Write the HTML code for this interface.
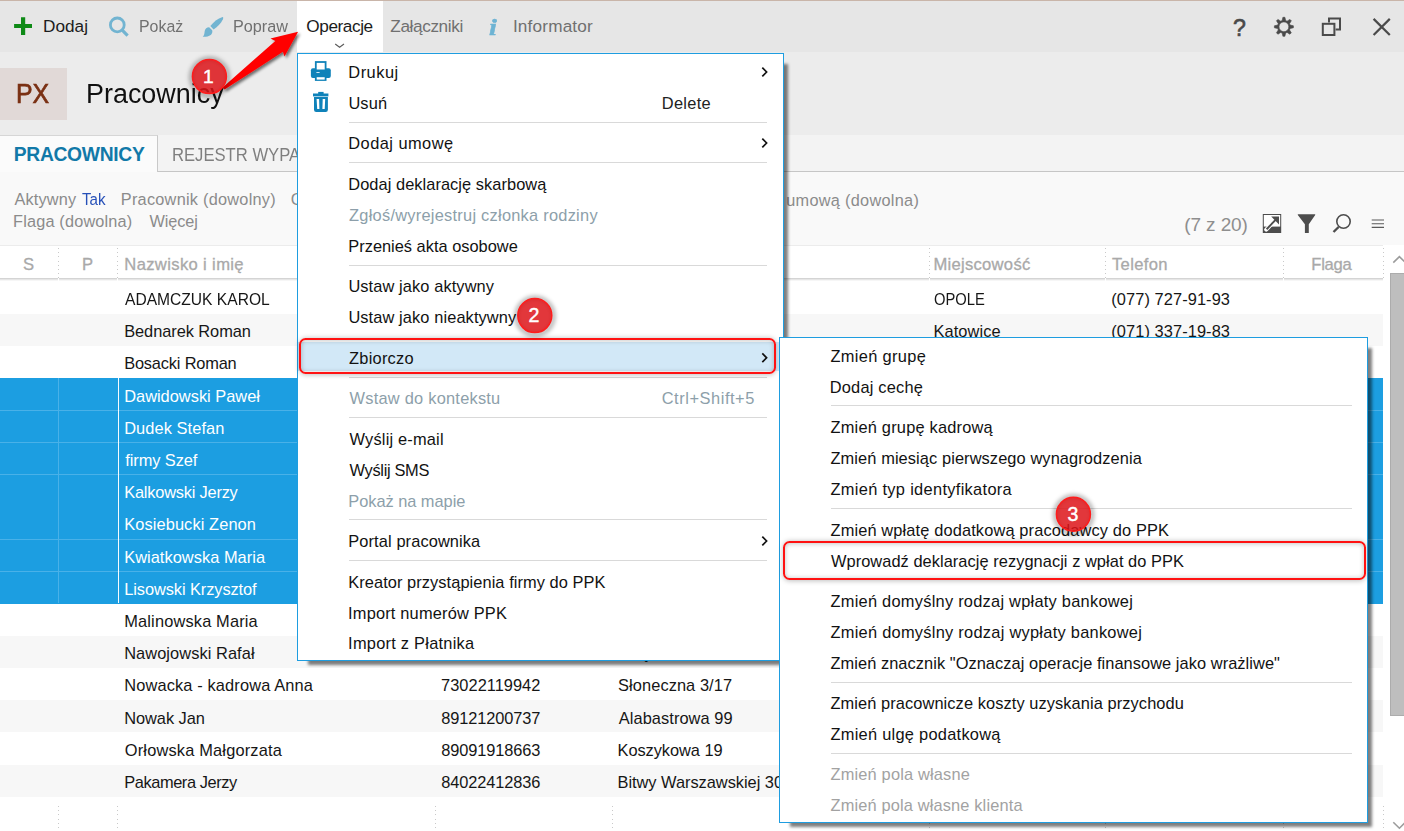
<!DOCTYPE html>
<html lang="pl"><head><meta charset="utf-8"><title>Pracownicy</title>
<style>
html,body{margin:0;padding:0}
body{width:1404px;height:831px;position:relative;overflow:hidden;background:#fff;font-family:"Liberation Sans",sans-serif}
.a{position:absolute}
.t{position:absolute;white-space:pre}
svg{position:absolute;left:0;top:0;overflow:visible}
.sep{position:absolute;height:1px;background:#d9d9d9}
.vd{position:absolute;width:1px;background:repeating-linear-gradient(to bottom,#c9c9c9 0,#c9c9c9 1px,transparent 1px,transparent 4.2px)}
</style></head><body>

<div class="a" style="left:0;top:0;width:1404px;height:52px;background:#e6e6e6"></div>
<div class="a" style="left:0;top:0;width:1404px;height:1px;background:#c9b5a9"></div>
<div class="a" style="left:297px;top:1px;width:85.5px;height:52px;background:#fff"></div>
<div class="a" style="left:0;top:52px;width:1404px;height:83px;background:#ececec"></div>
<div class="a" style="left:0;top:68px;width:67px;height:52px;background:#e1d9d7"></div>
<div class="a" style="left:0;top:135px;width:1404px;height:37px;background:#f3f3f3"></div>
<div class="a" style="left:0;top:171px;width:1404px;height:1px;background:#c6c6c6"></div>
<div class="a" style="left:0;top:135px;width:157.5px;height:37px;background:#fbfbfb;border-top:1px solid #d6d6d6;border-right:1px solid #c9c9c9;box-sizing:border-box"></div>
<div class="a" style="left:0;top:172px;width:1404px;height:73px;background:#f9f9f9"></div>
<div class="a" style="left:0;top:245px;width:1404px;height:586px;background:#fff"></div>
<div class="a" style="left:0;top:245px;width:1383px;height:1px;background:#ececec"></div>
<div class="a" style="left:0;top:278px;width:1383px;height:1px;background:#d4d4d4"></div><div class="a" style="left:0;top:279px;width:1383px;height:1px;background:#e6e6e6"></div><div class="a" style="left:0;top:280px;width:1383px;height:1px;background:#f6f6f6"></div>
<div class="a" style="left:0;top:281.5px;width:1383px;height:32.5px;background:#ffffff"></div>
<div class="a" style="left:0;top:313.7px;width:1383px;height:32.5px;background:#f7f7f7"></div>
<div class="a" style="left:0;top:345.9px;width:1383px;height:32.5px;background:#ffffff"></div>
<div class="a" style="left:0;top:378.1px;width:1383px;height:32.5px;background:#1c9ee1"></div>
<div class="a" style="left:0;top:410.3px;width:1383px;height:32.5px;background:#1c9ee1"></div>
<div class="a" style="left:0;top:442.5px;width:1383px;height:32.5px;background:#1c9ee1"></div>
<div class="a" style="left:0;top:474.7px;width:1383px;height:32.5px;background:#1c9ee1"></div>
<div class="a" style="left:0;top:506.9px;width:1383px;height:32.5px;background:#1c9ee1"></div>
<div class="a" style="left:0;top:539.1px;width:1383px;height:32.5px;background:#1c9ee1"></div>
<div class="a" style="left:0;top:571.3px;width:1383px;height:32.5px;background:#1c9ee1"></div>
<div class="a" style="left:0;top:603.5px;width:1383px;height:32.5px;background:#ffffff"></div>
<div class="a" style="left:0;top:635.7px;width:1383px;height:32.5px;background:#f7f7f7"></div>
<div class="a" style="left:0;top:667.9px;width:1383px;height:32.5px;background:#ffffff"></div>
<div class="a" style="left:0;top:700.1px;width:1383px;height:32.5px;background:#f7f7f7"></div>
<div class="a" style="left:0;top:732.3px;width:1383px;height:32.5px;background:#ffffff"></div>
<div class="a" style="left:0;top:764.5px;width:1383px;height:32.5px;background:#f7f7f7"></div>
<div class="a" style="left:0;top:409.8px;width:1383px;height:1px;background:#49b1e8"></div>
<div class="a" style="left:0;top:442.0px;width:1383px;height:1px;background:#49b1e8"></div>
<div class="a" style="left:0;top:474.2px;width:1383px;height:1px;background:#49b1e8"></div>
<div class="a" style="left:0;top:538.6px;width:1383px;height:1px;background:#49b1e8"></div>
<div class="a" style="left:0;top:570.8px;width:1383px;height:1px;background:#49b1e8"></div>
<div class="a" style="left:58px;top:378.1px;width:1px;height:225.4px;background:#49b1e8"></div>
<div class="a" style="left:117.5px;top:378.1px;width:1.3px;height:225.4px;background:#f4fbff"></div>
<div class="a" style="left:58px;top:277px;width:1px;height:4px;background:#fff"></div>
<div class="vd" style="left:58px;top:248px;height:30px"></div>
<div class="vd" style="left:58px;top:806.0px;height:25.0px"></div>
<div class="a" style="left:117px;top:277px;width:1px;height:4px;background:#fff"></div>
<div class="vd" style="left:117px;top:248px;height:30px"></div>
<div class="vd" style="left:117px;top:806.0px;height:25.0px"></div>
<div class="a" style="left:435px;top:277px;width:1px;height:4px;background:#fff"></div>
<div class="vd" style="left:435px;top:248px;height:30px"></div>
<div class="vd" style="left:435px;top:806.0px;height:25.0px"></div>
<div class="a" style="left:612px;top:277px;width:1px;height:4px;background:#fff"></div>
<div class="vd" style="left:612px;top:248px;height:30px"></div>
<div class="vd" style="left:612px;top:806.0px;height:25.0px"></div>
<div class="a" style="left:928.5px;top:277px;width:1px;height:4px;background:#fff"></div>
<div class="vd" style="left:928.5px;top:248px;height:30px"></div>
<div class="vd" style="left:928.5px;top:806.0px;height:25.0px"></div>
<div class="a" style="left:1105px;top:277px;width:1px;height:4px;background:#fff"></div>
<div class="vd" style="left:1105px;top:248px;height:30px"></div>
<div class="vd" style="left:1105px;top:806.0px;height:25.0px"></div>
<div class="a" style="left:1283px;top:277px;width:1px;height:4px;background:#fff"></div>
<div class="vd" style="left:1283px;top:248px;height:30px"></div>
<div class="vd" style="left:1283px;top:806.0px;height:25.0px"></div>
<div class="a" style="left:1382.5px;top:277px;width:1px;height:4px;background:#fff"></div>
<div class="vd" style="left:1382.5px;top:248px;height:30px"></div>
<div class="vd" style="left:1382.5px;top:806.0px;height:25.0px"></div>
<div class="a" style="left:1383.5px;top:245px;width:21px;height:586px;background:#fff"></div>
<div class="a" style="left:1390.3px;top:272.5px;width:15px;height:443px;background:#bebebe;border:1px solid #acacac;box-sizing:border-box"></div>
<svg width="1404" height="831" viewBox="0 0 1404 831">
<g fill="none" stroke="#9c9c9c" stroke-width="1.6"><polyline points="1393.3,262.6 1399.4,256.6 1405.5,262.6"/><polyline points="1393.3,822.2 1399.4,828.2 1405.5,822.2"/></g>
<polyline points="335.2,44 339.6,47.2 344,44" fill="none" stroke="#5a5a5a" stroke-width="1.1"/>
<!-- plus -->
<path d="M21 17.2h4.2v6.7H32v4.1h-6.8V35H21v-7H14.1v-4.1H21z" fill="#0e8a16"/>
<!-- magnifier -->
<circle cx="117.3" cy="24.9" r="6.9" fill="none" stroke="#72b4d1" stroke-width="2.8"/>
<path d="M122.2 30.2 L127.6 35.6" stroke="#72b4d1" stroke-width="3.2" stroke-linecap="butt"/>
<!-- brush -->
<path d="M222.6 17 C223.4 16.9 223.3 18.2 222.9 19.2 C221 23.2 217.8 26.6 213.6 29.4 L210.3 26 C213.6 22 217.5 18.6 222.6 17 Z" fill="#72b4d1"/>
<path d="M209.2 27.3 L212.2 30.3 C213 33.2 211 35.8 207.6 36.4 C205.8 36.8 203.8 36.9 202.7 36.7 C204.6 35.2 204.4 33 204.7 31 C205.1 28.6 207 27.2 209.2 27.3 Z" fill="#72b4d1"/>
<!-- gear -->

<path d="M1282.15,20.60L1282.90,17.30L1284.90,17.30L1285.65,20.60L1287.05,21.18L1289.91,19.38L1291.32,20.79L1289.52,23.65L1290.10,25.05L1293.40,25.80L1293.40,27.80L1290.10,28.55L1289.52,29.95L1291.32,32.81L1289.91,34.22L1287.05,32.42L1285.65,33.00L1284.90,36.30L1282.90,36.30L1282.15,33.00L1280.75,32.42L1277.89,34.22L1276.48,32.81L1278.28,29.95L1277.70,28.55L1274.40,27.80L1274.40,25.80L1277.70,25.05L1278.28,23.65L1276.48,20.79L1277.89,19.38L1280.75,21.18ZM1288.80,26.80A4.9,4.9 0 1,0 1279.00,26.80A4.9,4.9 0 1,0 1288.80,26.80Z" fill="#4a4a4a" fill-rule="evenodd" stroke="#4a4a4a" stroke-width="0.6" stroke-linejoin="round"/>

<!-- restore -->
<g fill="none" stroke="#4a4a4a" stroke-width="2"><path d="M1329 22.6V18.4H1340V29.5H1335.6"/><rect x="1322.8" y="23.8" width="11.6" height="11.2"/></g>
<!-- close -->
<g stroke="#4a4a4a" stroke-width="2.2"><path d="M1373.6 18.9L1389.8 35M1389.8 18.9L1373.6 35"/></g>
<!-- export icon -->
<rect x="1263.3" y="214.5" width="17.4" height="18" fill="#fff" stroke="#4d4d4d" stroke-width="1"/>
<rect x="1263" y="226.6" width="18" height="6.3" fill="#4d4d4d"/>
<path d="M1266.2 229.6L1275.6 219.8" stroke="#fff" stroke-width="4" stroke-linecap="round"/>
<path d="M1266.6 229.2L1276 219.4" stroke="#4d4d4d" stroke-width="2" stroke-linecap="butt"/>
<path d="M1271.2 216.6H1279V224.6Z" fill="#4d4d4d"/>
<!-- funnel -->
<path d="M1297.8 214.2H1315.2V215L1308.8 224.2V232.9H1304.9V224.2L1297.8 215Z" fill="#4d4d4d"/>
<!-- search -->
<circle cx="1343.5" cy="221.5" r="6.7" fill="none" stroke="#4d4d4d" stroke-width="1.6"/>
<path d="M1338.6 227L1333.5 232" stroke="#4d4d4d" stroke-width="2.4"/>
<!-- hamburger -->
<g stroke="#5a5a5a" stroke-width="1.1"><path d="M1371.7 220H1384M1371.7 223.7H1384M1371.7 227.4H1384"/></g>
</svg>

<span class="t" style="top:15px;font-size:17.2px;line-height:22px;color:#1c1c1c;left:43.10px;">Dodaj</span>
<span class="t" style="top:15px;font-size:17.2px;line-height:22px;color:#707070;left:139.30px;transform:scaleX(0.9254);transform-origin:0 0;">Pokaż</span>
<span class="t" style="top:15px;font-size:17.2px;line-height:22px;color:#707070;left:233.28px;transform:scaleX(0.9421);transform-origin:0 0;">Popraw</span>
<span class="t" style="top:15px;font-size:17.2px;line-height:22px;color:#707070;left:390.30px;letter-spacing:-0.383px;">Załączniki</span>
<span class="t" style="top:15px;font-size:17.2px;line-height:22px;color:#707070;left:512.90px;letter-spacing:0.172px;">Informator</span>
<span class="t" style="top:12px;font-size:24px;line-height:31px;color:#6db3d3;left:488.80px;font-weight:700;font-family:'Liberation Serif', serif;font-style:italic;-webkit-text-stroke:0.5px #6db3d3;transform:scaleX(1.18);transform-origin:0 0;">i</span>
<span class="t" style="top:13px;font-size:23.2px;line-height:30px;color:#4a4a4a;left:1233.10px;-webkit-text-stroke:0.6px #4a4a4a;">?</span>
<span class="t" style="top:75px;font-size:28.2px;line-height:37px;color:#7a3013;left:16.45px;transform:scaleX(0.8829);transform-origin:0 0;-webkit-text-stroke:0.7px #7a3013;">PX</span>
<span class="t" style="top:75px;font-size:28.2px;line-height:37px;color:#101010;left:86.40px;transform:scaleX(0.9551);transform-origin:0 0;">Pracownicy</span>
<span class="t" style="top:142px;font-size:19.3px;line-height:25px;color:#1279a8;left:13.80px;letter-spacing:-0.328px;font-weight:700;">PRACOWNICY</span>
<span class="t" style="top:142px;font-size:19.2px;line-height:25px;color:#7f7f7f;left:172.10px;transform:scaleX(0.8669);transform-origin:0 0;">REJESTR WYPADKÓW</span>
<span class="t" style="top:189px;font-size:16.3px;line-height:21px;color:#8b8b8b;left:14.40px;letter-spacing:0.177px;">Aktywny</span>
<span class="t" style="top:189px;font-size:16.3px;line-height:21px;color:#2650b8;left:81.82px;transform:scaleX(0.9317);transform-origin:0 0;">Tak</span>
<span class="t" style="top:189px;font-size:16.3px;line-height:21px;color:#8b8b8b;left:120.80px;letter-spacing:0.258px;">Pracownik (dowolny)</span>
<span class="t" style="top:189px;font-size:16.3px;line-height:21px;color:#8b8b8b;left:290.70px;letter-spacing:0.300px;">Cecha (dowolna)</span>
<span class="t" style="top:190px;font-size:16.3px;line-height:21px;color:#8b8b8b;left:704.47px;letter-spacing:0.300px;">Z aktywną umową (dowolna)</span>
<span class="t" style="top:211px;font-size:16.3px;line-height:21px;color:#8b8b8b;left:13.10px;letter-spacing:0.168px;">Flaga (dowolna)</span>
<span class="t" style="top:211px;font-size:16.3px;line-height:21px;color:#8b8b8b;left:149.50px;letter-spacing:-0.077px;">Więcej</span>
<span class="t" style="top:212px;font-size:19.0px;line-height:25px;color:#8e8e8e;left:1184.20px;letter-spacing:-0.098px;">(7 z 20)</span>
<span class="t" style="top:254px;font-size:16.6px;line-height:22px;color:#a9a9a9;left:23.10px;-webkit-text-stroke:0.3px #a9a9a9;">S</span>
<span class="t" style="top:254px;font-size:16.6px;line-height:22px;color:#a9a9a9;left:81.90px;-webkit-text-stroke:0.3px #a9a9a9;">P</span>
<span class="t" style="top:254px;font-size:16.6px;line-height:22px;color:#a9a9a9;left:124.30px;letter-spacing:0.354px;-webkit-text-stroke:0.3px #a9a9a9;">Nazwisko i imię</span>
<span class="t" style="top:254px;font-size:16.6px;line-height:22px;color:#a9a9a9;left:933.40px;letter-spacing:0.281px;-webkit-text-stroke:0.3px #a9a9a9;">Miejscowość</span>
<span class="t" style="top:254px;font-size:16.6px;line-height:22px;color:#a9a9a9;left:1112.00px;letter-spacing:0.317px;-webkit-text-stroke:0.3px #a9a9a9;">Telefon</span>
<span class="t" style="top:254px;font-size:16.6px;line-height:22px;color:#a9a9a9;left:1311.30px;letter-spacing:-0.248px;-webkit-text-stroke:0.3px #a9a9a9;">Flaga</span>
<span class="t" style="top:289px;font-size:16.4px;line-height:21px;color:#161616;left:125.20px;transform:scaleX(0.9515);transform-origin:0 0;">ADAMCZUK KAROL</span>
<span class="t" style="top:289px;font-size:16.4px;line-height:21px;color:#161616;left:934.07px;transform:scaleX(0.8990);transform-origin:0 0;">OPOLE</span>
<span class="t" style="top:289px;font-size:16.4px;line-height:21px;color:#161616;left:1111.30px;letter-spacing:0.079px;">(077) 727-91-93</span>
<span class="t" style="top:321px;font-size:16.4px;line-height:21px;color:#161616;left:124.20px;letter-spacing:-0.062px;">Bednarek Roman</span>
<span class="t" style="top:321px;font-size:16.4px;line-height:21px;color:#161616;left:933.40px;letter-spacing:0.111px;">Katowice</span>
<span class="t" style="top:321px;font-size:16.4px;line-height:21px;color:#161616;left:1111.30px;letter-spacing:0.079px;">(071) 337-19-83</span>
<span class="t" style="top:353px;font-size:16.4px;line-height:21px;color:#161616;left:124.20px;letter-spacing:-0.186px;">Bosacki Roman</span>
<span class="t" style="top:386px;font-size:16.4px;line-height:21px;color:#ffffff;left:124.20px;">Dawidowski Paweł</span>
<span class="t" style="top:418px;font-size:16.4px;line-height:21px;color:#ffffff;left:124.20px;letter-spacing:0.077px;">Dudek Stefan</span>
<span class="t" style="top:450px;font-size:16.4px;line-height:21px;color:#ffffff;left:125.30px;letter-spacing:-0.093px;">firmy Szef</span>
<span class="t" style="top:482px;font-size:16.4px;line-height:21px;color:#ffffff;left:124.20px;letter-spacing:-0.211px;">Kalkowski Jerzy</span>
<span class="t" style="top:514px;font-size:16.4px;line-height:21px;color:#ffffff;left:124.20px;letter-spacing:0.097px;">Kosiebucki Zenon</span>
<span class="t" style="top:547px;font-size:16.4px;line-height:21px;color:#ffffff;left:124.20px;letter-spacing:0.035px;">Kwiatkowska Maria</span>
<span class="t" style="top:579px;font-size:16.4px;line-height:21px;color:#ffffff;left:124.20px;letter-spacing:-0.083px;">Lisowski Krzysztof</span>
<span class="t" style="top:611px;font-size:16.4px;line-height:21px;color:#161616;left:124.20px;letter-spacing:0.159px;">Malinowska Maria</span>
<span class="t" style="top:643px;font-size:16.4px;line-height:21px;color:#161616;left:124.20px;letter-spacing:0.068px;">Nawojowski Rafał</span>
<span class="t" style="top:643px;font-size:16.4px;line-height:21px;color:#161616;left:441.20px;letter-spacing:-0.121px;">87120509876</span>
<span class="t" style="top:643px;font-size:16.4px;line-height:21px;color:#161616;left:617.50px;letter-spacing:0.250px;">Księcia Józefa 18, 100</span>
<span class="t" style="top:675px;font-size:16.4px;line-height:21px;color:#161616;left:124.20px;letter-spacing:0.136px;">Nowacka - kadrowa Anna</span>
<span class="t" style="top:675px;font-size:16.4px;line-height:21px;color:#161616;left:441.10px;letter-spacing:0.021px;">73022119942</span>
<span class="t" style="top:675px;font-size:16.4px;line-height:21px;color:#161616;left:618.10px;letter-spacing:0.074px;">Słoneczna 3/17</span>
<span class="t" style="top:708px;font-size:16.4px;line-height:21px;color:#161616;left:124.20px;letter-spacing:-0.038px;">Nowak Jan</span>
<span class="t" style="top:708px;font-size:16.4px;line-height:21px;color:#161616;left:441.20px;letter-spacing:-0.111px;">89121200737</span>
<span class="t" style="top:708px;font-size:16.4px;line-height:21px;color:#161616;left:618.80px;letter-spacing:0.060px;">Alabastrowa 99</span>
<span class="t" style="top:740px;font-size:16.4px;line-height:21px;color:#161616;left:124.80px;letter-spacing:0.172px;">Orłowska Małgorzata</span>
<span class="t" style="top:740px;font-size:16.4px;line-height:21px;color:#161616;left:441.20px;letter-spacing:-0.121px;">89091918663</span>
<span class="t" style="top:740px;font-size:16.4px;line-height:21px;color:#161616;left:617.50px;letter-spacing:-0.057px;">Koszykowa 19</span>
<span class="t" style="top:772px;font-size:16.4px;line-height:21px;color:#161616;left:124.20px;letter-spacing:-0.414px;">Pakamera Jerzy</span>
<span class="t" style="top:772px;font-size:16.4px;line-height:21px;color:#161616;left:441.20px;letter-spacing:-0.121px;">84022412836</span>
<span class="t" style="top:772px;font-size:16.4px;line-height:21px;color:#161616;left:617.50px;letter-spacing:-0.027px;">Bitwy Warszawskiej 30</span>
<span class="t" style="top:15px;font-size:17.2px;line-height:22px;color:#1c1c1c;left:306.30px;letter-spacing:-0.418px;">Operacje</span>
<div class="a" style="left:308px;top:64px;width:480px;height:601px;background:rgba(0,0,0,.5);filter:blur(1.7px)"></div>
<div class="a" style="left:297px;top:53px;width:487px;height:608px;background:#fff;border:1px solid #1e9de0;box-sizing:border-box"></div>
<div class="sep" style="left:348.7px;top:121.8px;width:418.3px"></div>
<div class="sep" style="left:348.7px;top:162.2px;width:418.3px"></div>
<div class="sep" style="left:348.7px;top:265.0px;width:418.3px"></div>
<div class="sep" style="left:348.7px;top:376.6px;width:418.3px"></div>
<div class="sep" style="left:348.7px;top:416.5px;width:418.3px"></div>
<div class="sep" style="left:348.7px;top:519.4px;width:418.3px"></div>
<div class="sep" style="left:348.7px;top:560.1px;width:418.3px"></div>
<div class="a" style="left:298px;top:341.5px;width:485px;height:29.8px;background:#d2e8f7"></div>
<svg width="1404" height="831" viewBox="0 0 1404 831">
<!-- printer -->
<g fill="#0f82b9"><rect x="310.9" y="68.3" width="19.9" height="9.8" rx="2"/><path d="M314.9 61.1h11.6v8h-11.6z"/><rect x="314.9" y="76" width="11.6" height="4.9"/></g>
<rect x="316.7" y="62.9" width="8" height="6.6" fill="#fff"/><rect x="316.7" y="77.2" width="8" height="2.4" fill="#fff"/><rect x="316.4" y="72" width="3.2" height="1" fill="#cfe7f3"/>
<!-- trash -->
<g fill="#0f82b9"><rect x="313" y="93.5" width="15.4" height="2.9"/><rect x="318.2" y="91.9" width="5.4" height="2.2"/><path d="M314 97H327.9V109.8a2.2 2.2 0 0 1-2.2 2.2H316.2a2.2 2.2 0 0 1-2.2-2.2Z"/></g>
<path d="M316.6 99H319.1L319.4 109H317.2ZM322.7 99H325.2L324.7 109H322.4Z" fill="#fff"/>
<!-- submenu arrows -->
<g fill="none" stroke="#111" stroke-width="1.7"><polyline points="762.3,67.6 766.6,72 762.3,76.4"/><polyline points="762.3,138.6 766.6,143 762.3,147.4"/><polyline points="762.3,353.4 766.6,357.8 762.3,362.2"/><polyline points="762.3,536.6 766.6,541 762.3,545.4"/></g>
</svg>

<span class="t" style="top:62px;font-size:16.4px;line-height:21px;color:#121212;left:348.30px;letter-spacing:0.511px;">Drukuj</span>
<span class="t" style="top:93px;font-size:16.4px;line-height:21px;color:#121212;left:348.40px;letter-spacing:0.145px;">Usuń</span>
<span class="t" style="top:133px;font-size:16.4px;line-height:21px;color:#121212;left:348.30px;letter-spacing:0.455px;">Dodaj umowę</span>
<span class="t" style="top:174px;font-size:16.4px;line-height:21px;color:#121212;left:348.30px;letter-spacing:0.051px;">Dodaj deklarację skarbową</span>
<span class="t" style="top:205px;font-size:16.4px;line-height:21px;color:#8d9faa;left:349.10px;letter-spacing:0.250px;">Zgłoś/wyrejestruj członka rodziny</span>
<span class="t" style="top:236px;font-size:16.4px;line-height:21px;color:#121212;left:348.30px;">Przenieś akta osobowe</span>
<span class="t" style="top:276px;font-size:16.4px;line-height:21px;color:#121212;left:348.40px;letter-spacing:0.100px;">Ustaw jako aktywny</span>
<span class="t" style="top:307px;font-size:16.4px;line-height:21px;color:#121212;left:348.40px;letter-spacing:0.101px;">Ustaw jako nieaktywny</span>
<span class="t" style="top:348px;font-size:16.4px;line-height:21px;color:#121212;left:349.10px;letter-spacing:0.234px;">Zbiorczo</span>
<span class="t" style="top:388px;font-size:16.4px;line-height:21px;color:#8d9faa;left:349.60px;letter-spacing:0.234px;">Wstaw do kontekstu</span>
<span class="t" style="top:429px;font-size:16.4px;line-height:21px;color:#121212;left:349.60px;letter-spacing:0.181px;">Wyślij e-mail</span>
<span class="t" style="top:460px;font-size:16.4px;line-height:21px;color:#121212;left:349.60px;letter-spacing:-0.325px;">Wyślij SMS</span>
<span class="t" style="top:491px;font-size:16.4px;line-height:21px;color:#8d9faa;left:348.30px;letter-spacing:-0.037px;">Pokaż na mapie</span>
<span class="t" style="top:531px;font-size:16.4px;line-height:21px;color:#121212;left:348.30px;letter-spacing:0.104px;">Portal pracownika</span>
<span class="t" style="top:572px;font-size:16.4px;line-height:21px;color:#121212;left:348.30px;letter-spacing:0.064px;">Kreator przystąpienia firmy do PPK</span>
<span class="t" style="top:603px;font-size:16.4px;line-height:21px;color:#121212;left:348.10px;letter-spacing:0.175px;">Import numerów PPK</span>
<span class="t" style="top:633px;font-size:16.4px;line-height:21px;color:#121212;left:348.10px;letter-spacing:0.249px;">Import z Płatnika</span>
<span class="t" style="top:93px;font-size:16.4px;line-height:21px;color:#222;left:661.80px;letter-spacing:0.303px;">Delete</span>
<span class="t" style="top:388px;font-size:16.4px;line-height:21px;color:#8d9faa;left:661.70px;letter-spacing:0.557px;">Ctrl+Shift+5</span>
<div class="a" style="left:299.1px;top:337.9px;width:476.7px;height:36.6px;border:2px solid #ff1212;border-radius:6.5px;box-sizing:border-box;box-shadow:0 0.5px 5px rgba(0,0,0,.25),inset 0 0.5px 5px rgba(0,0,0,.25)"></div>
<div class="a" style="left:790px;top:348px;width:582px;height:479px;background:rgba(0,0,0,.5);filter:blur(1.7px)"></div>
<div class="a" style="left:779px;top:337px;width:589px;height:486px;background:#fff;border:1px solid #1e9de0;box-sizing:border-box"></div>
<div class="sep" style="left:831px;top:405.4px;width:520.5px"></div>
<div class="sep" style="left:831px;top:508.2px;width:520.5px"></div>
<div class="sep" style="left:831px;top:681.7px;width:520.5px"></div>
<div class="sep" style="left:831px;top:753.1px;width:520.5px"></div>
<span class="t" style="top:346px;font-size:16.4px;line-height:21px;color:#121212;left:830.50px;letter-spacing:0.336px;">Zmień grupę</span>
<span class="t" style="top:377px;font-size:16.4px;line-height:21px;color:#121212;left:829.70px;letter-spacing:0.215px;">Dodaj cechę</span>
<span class="t" style="top:417px;font-size:16.4px;line-height:21px;color:#121212;left:830.50px;letter-spacing:0.206px;">Zmień grupę kadrową</span>
<span class="t" style="top:448px;font-size:16.4px;line-height:21px;color:#121212;left:830.50px;letter-spacing:0.090px;">Zmień miesiąc pierwszego wynagrodzenia</span>
<span class="t" style="top:479px;font-size:16.4px;line-height:21px;color:#121212;left:830.50px;letter-spacing:0.314px;">Zmień typ identyfikatora</span>
<span class="t" style="top:520px;font-size:16.4px;line-height:21px;color:#121212;left:830.50px;letter-spacing:0.128px;">Zmień wpłatę dodatkową pracodawcy do PPK</span>
<span class="t" style="top:551px;font-size:16.4px;line-height:21px;color:#121212;left:831.00px;letter-spacing:0.050px;">Wprowadź deklarację rezygnacji z wpłat do PPK</span>
<span class="t" style="top:591px;font-size:16.4px;line-height:21px;color:#121212;left:830.50px;letter-spacing:0.251px;">Zmień domyślny rodzaj wpłaty bankowej</span>
<span class="t" style="top:622px;font-size:16.4px;line-height:21px;color:#121212;left:830.50px;letter-spacing:0.266px;">Zmień domyślny rodzaj wypłaty bankowej</span>
<span class="t" style="top:653px;font-size:16.4px;line-height:21px;color:#121212;left:830.50px;letter-spacing:0.056px;">Zmień znacznik "Oznaczaj operacje finansowe jako wrażliwe"</span>
<span class="t" style="top:693px;font-size:16.4px;line-height:21px;color:#121212;left:830.50px;letter-spacing:0.082px;">Zmień pracownicze koszty uzyskania przychodu</span>
<span class="t" style="top:724px;font-size:16.4px;line-height:21px;color:#121212;left:830.50px;letter-spacing:0.264px;">Zmień ulgę podatkową</span>
<span class="t" style="top:764px;font-size:16.4px;line-height:21px;color:#a2a2a2;left:830.50px;letter-spacing:0.168px;">Zmień pola własne</span>
<span class="t" style="top:795px;font-size:16.4px;line-height:21px;color:#a2a2a2;left:830.50px;letter-spacing:0.143px;">Zmień pola własne klienta</span>
<div class="a" style="left:783.4px;top:540.6px;width:582.2px;height:39.2px;border:2px solid #ff1212;border-radius:6.5px;box-sizing:border-box;box-shadow:0 0.5px 5px rgba(0,0,0,.25),inset 0 0.5px 5px rgba(0,0,0,.25)"></div>
<svg width="1404" height="831" viewBox="0 0 1404 831">
<defs><filter id="ds" x="-20%" y="-20%" width="150%" height="150%"><feGaussianBlur in="SourceAlpha" stdDeviation="1.8"/><feOffset dx="1.5" dy="2"/><feComponentTransfer><feFuncA type="linear" slope="0.55"/></feComponentTransfer><feMerge><feMergeNode/><feMergeNode in="SourceGraphic"/></feMerge></filter>
<filter id="bs" x="-40%" y="-40%" width="180%" height="180%"><feGaussianBlur stdDeviation="2.2"/></filter></defs>
<path d="M222.6 87.6L275.3 40.9L270.5 38.4L298.1 31.7L284.5 56.6L282.9 51.7L224.6 89.6Z" fill="#ff0000" filter="url(#ds)"/>
<g fill="none" stroke="#000" stroke-opacity=".32" stroke-width="4" filter="url(#bs)"><circle cx="209.6" cy="77.2" r="18.5"/><circle cx="535" cy="316.2" r="18.5"/><circle cx="1073.6" cy="514.8" r="18.5"/></g>
<g fill="#dd1419" fill-opacity=".85" stroke="#ff1c1c" stroke-width="1.5">
<circle cx="209.4" cy="76.6" r="17"/>
<circle cx="534.8" cy="315.6" r="17"/>
<circle cx="1073.4" cy="514.2" r="17"/>
</g>
</svg>

<span class="t" style="top:64px;font-size:19.2px;line-height:25px;color:#fff;left:203.00px;-webkit-text-stroke:0.45px #fff;">1</span>
<span class="t" style="top:303px;font-size:19.6px;line-height:25px;color:#fff;left:528.55px;-webkit-text-stroke:0.45px #fff;">2</span>
<span class="t" style="top:502px;font-size:19.6px;line-height:25px;color:#fff;left:1067.40px;-webkit-text-stroke:0.45px #fff;">3</span>

</body></html>
